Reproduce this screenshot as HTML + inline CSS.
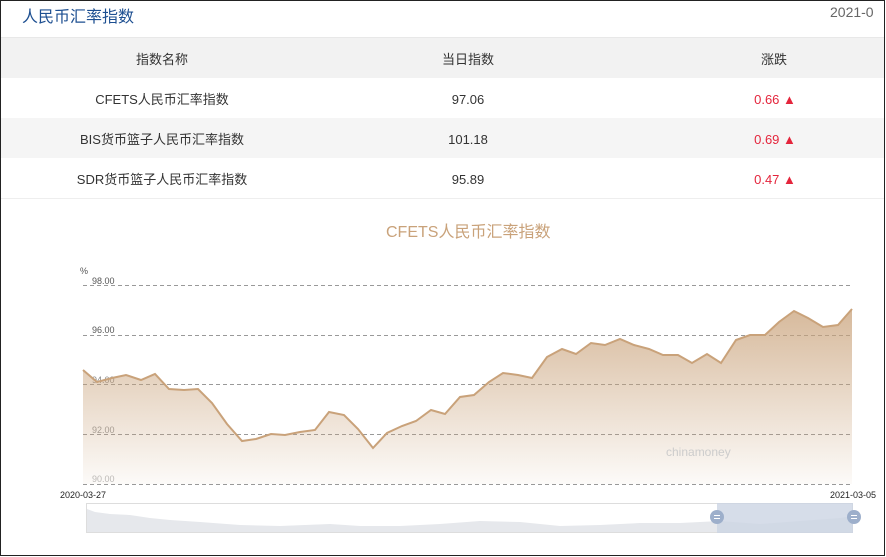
<!DOCTYPE html>
<html><head><meta charset="utf-8"><style>
*{margin:0;padding:0;box-sizing:border-box}
body{width:886px;height:557px;background:#fff;font-family:"Liberation Sans","Noto Sans CJK SC",sans-serif;position:relative;overflow:hidden}
.frame{position:absolute;left:0;top:0;width:885px;height:556px;border:1px solid #222}
.t{position:absolute;white-space:nowrap}
.row{position:absolute;left:1px;width:883px;height:40px;font-size:13px;color:#333}
.row span{position:absolute;top:2px;line-height:40px;transform:translateX(-50%)}
.red{color:#e4253c}
</style></head><body>
<div class="frame"></div>
<div class="t" style="left:22px;top:3px;font-size:16px;color:#1d4f91">人民币汇率指数</div>
<div class="t" style="left:830px;top:4px;font-size:14px;color:#666">2021-0</div>
<div style="position:absolute;left:1px;top:37px;width:883px;height:1px;background:#e8e8e8"></div>
<div class="row" style="top:38px;background:#f2f2f2"><span style="left:161px">指数名称</span><span style="left:467px">当日指数</span><span style="left:773px">涨跌</span></div>
<div class="row" style="top:78px;background:#fff"><span style="left:161px">CFETS人民币汇率指数</span><span style="left:467px">97.06</span><span style="left:774px" class="red">0.66 ▲</span></div>
<div class="row" style="top:118px;background:#f5f5f5"><span style="left:161px">BIS货币篮子人民币汇率指数</span><span style="left:467px">101.18</span><span style="left:774px" class="red">0.69 ▲</span></div>
<div class="row" style="top:158px;background:#fff"><span style="left:161px">SDR货币篮子人民币汇率指数</span><span style="left:467px">95.89</span><span style="left:774px" class="red">0.47 ▲</span></div>
<div style="position:absolute;left:1px;top:198px;width:883px;height:1px;background:#eee"></div>
<div class="t" style="left:386px;top:218px;font-size:16px;color:#c9a27a">CFETS人民币汇率指数</div>
<svg width="886" height="557" style="position:absolute;left:0;top:0" font-family="Liberation Sans,sans-serif">
<defs><linearGradient id="g" x1="0" y1="0" x2="0" y2="1"><stop offset="0" stop-color="#c9a27a" stop-opacity=".75"/><stop offset="1" stop-color="#c9a27a" stop-opacity=".05"/></linearGradient></defs>
<g stroke="#999" stroke-dasharray="4,3" stroke-width="1">
<line x1="83" y1="285.5" x2="852" y2="285.5"/><line x1="83" y1="335.5" x2="852" y2="335.5"/><line x1="83" y1="384.5" x2="852" y2="384.5"/><line x1="83" y1="434.5" x2="852" y2="434.5"/><line x1="83" y1="484.5" x2="852" y2="484.5"/></g>
<g font-size="9" fill="#555"><text x="80" y="274">%</text><text x="92" y="284">98.00</text><text x="92" y="333">96.00</text><text x="92" y="383" fill="#888">94.00</text><text x="92" y="433" fill="#999">92.00</text><text x="92" y="482" fill="#bbb">90.00</text></g>
<path d="M83,370 L97,382 112,378 126,375 141,380 155,374 169,389 184,390 198,389 212,403 227,424 242,441 256,439 271,434 285,435 300,432 315,430 329,412 344,415 358,429 373,448 387,433 402,426 416,421 431,410 445,414 460,397 474,395 489,382 503,373 518,375 532,378 547,357 562,349 576,354 591,343 605,345 620,339 634,345 649,349 663,355 678,355 692,363 707,354 721,363 736,340 750,335 765,335 779,322 794,311 808,318 823,327 838,325 852,309 L852,484 L83,484Z" fill="url(#g)"/>
<path d="M83,370 L97,382 112,378 126,375 141,380 155,374 169,389 184,390 198,389 212,403 227,424 242,441 256,439 271,434 285,435 300,432 315,430 329,412 344,415 358,429 373,448 387,433 402,426 416,421 431,410 445,414 460,397 474,395 489,382 503,373 518,375 532,378 547,357 562,349 576,354 591,343 605,345 620,339 634,345 649,349 663,355 678,355 692,363 707,354 721,363 736,340 750,335 765,335 779,322 794,311 808,318 823,327 838,325 852,309" fill="none" stroke="#c9a27a" stroke-width="2"/>
<text x="666" y="456" font-size="12" fill="#ccc">chinamoney</text>
<text x="60" y="498" font-size="9" fill="#222">2020-03-27</text>
<text x="830" y="498" font-size="9" fill="#222">2021-03-05</text>
<rect x="86.5" y="503.5" width="766" height="29" fill="#fff" stroke="#ddd"/>
<path d="M87,509 L95,512 110,514 130,515 150,518 170,520 200,522 240,525 280,526 330,524 360,526 400,526 440,524 480,521 520,522 560,526 600,525 640,523 680,523 720,521 760,524 800,521 840,518 852,516 L852,532 L87,532Z" fill="#e6e8ec"/>
<rect x="717" y="503" width="136" height="30" fill="#ccd5e3" opacity=".8"/>
<circle cx="717" cy="517" r="7" fill="#9dafcb"/><circle cx="854" cy="517" r="7" fill="#9dafcb"/>
<g stroke="#fff" stroke-width="1"><line x1="714" y1="515.5" x2="720" y2="515.5"/><line x1="714" y1="518.5" x2="720" y2="518.5"/><line x1="851" y1="515.5" x2="857" y2="515.5"/><line x1="851" y1="518.5" x2="857" y2="518.5"/></g>
</svg>
</body></html>
